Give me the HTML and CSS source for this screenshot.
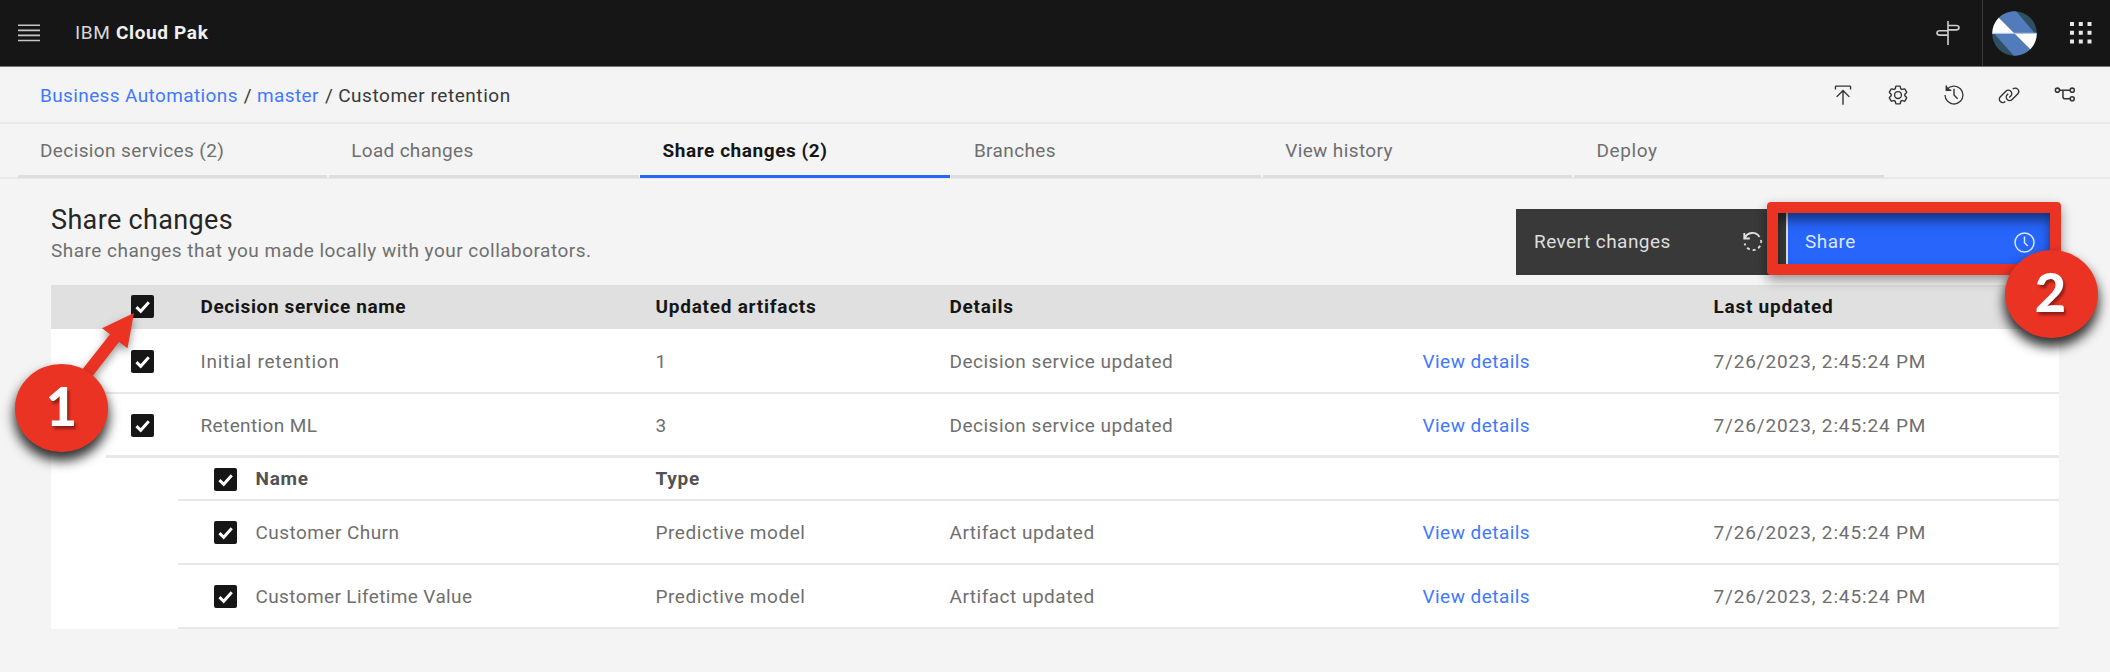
FILE: index.html
```
<!DOCTYPE html>
<html lang="en">
<head>
<meta charset="utf-8">
<title>IBM Cloud Pak</title>
<link rel="stylesheet" href="styles.css">
</head>
<body>
<svg class="defs" width="0" height="0">
  <symbol id="check" viewBox="0 0 22 22"><path d="M5.2 11.6 9.3 15.6 17 7" fill="none" stroke="#fff" stroke-width="2.8"/></symbol>
</svg>
<header class="topbar">
  <svg class="menu-icon" width="22" height="18" viewBox="0 0 22 18" stroke="#c6c6c6" stroke-width="1.6"><path d="M0 1.2h22M0 6.4h22M0 11.4h22M0 16.5h22"/></svg>
  <div class="brand">IBM <b>Cloud Pak</b></div>
  <svg class="sign-icon" width="26" height="26" viewBox="0 0 26 26" fill="none" stroke="#d0d0d0" stroke-width="1.6"><path d="M13 1v24M13 5.500h8q3 0 3 2.200t-3 2.200H13M13 10.700H5q-3 0-3 2.200t3 2.200H13"/></svg>
  <div class="account">
    <svg width="45" height="45" viewBox="0 0 45 45"><clipPath id="disc"><circle cx="22.500" cy="22.500" r="22.300"/></clipPath><g clip-path="url(#disc)"><path fill="#2f4f63" d="M0 0h45v45H0z"/><path fill="#527bbb" d="M0 0h24l19 22.500H22.500zM45 45H22L2 22.500h20.500z"/><path fill="#fff" d="M0 0l22.500 22.500H0zM45 45 22.500 22.500H45z"/><path stroke="#b9cce8" d="M0 22.300h45"/></g></svg>
    <svg class="grid-icon" width="22" height="22" viewBox="0 0 22 22" fill="#e8e8e8"><path d="M0 0h4v4H0zM8.800 0h4v4h-4zM17.500 0h4v4h-4zM0 8.800h4v4H0zM8.800 8.800h4v4h-4zM17.500 8.800h4v4h-4zM0 17.500h4v4H0zM8.800 17.500h4v4h-4zM17.500 17.500h4v4h-4z"/></svg>
  </div>
</header>
<div class="crumbs">
  <nav><a class="c1">Business Automations</a><i>/</i><a class="c2">master</a><i>/</i><span class="c3">Customer retention</span></nav>
  <div class="tools">
    <svg viewBox="0 0 32 32"><path d="M6 18l1.410 1.410L15 11.830V30h2V11.830l7.590 7.580L26 18 16 8z"/><path d="M6 8V4h20v4h2V4a2 2 0 0 0-2-2H6a2 2 0 0 0-2 2v4z"/></svg>
    <svg viewBox="0 0 32 32"><path d="M27 16.760v-1.530l1.920-1.680A2 2 0 0 0 29.300 11l-2.360-4a2 2 0 0 0-1.730-1 2 2 0 0 0-.64.100l-2.430.820a11.350 11.350 0 0 0-1.310-.750l-.51-2.520a2 2 0 0 0-2-1.610h-4.680a2 2 0 0 0-2 1.610l-.51 2.520a11.480 11.480 0 0 0-1.320.750l-2.380-.86A2 2 0 0 0 6.790 6a2 2 0 0 0-1.730 1L2.700 11a2 2 0 0 0 .41 2.510L5 15.240v1.530l-1.890 1.680A2 2 0 0 0 2.700 21l2.360 4a2 2 0 0 0 1.730 1 2 2 0 0 0 .64-.1l2.430-.82a11.350 11.350 0 0 0 1.310.750l.51 2.520a2 2 0 0 0 2 1.610h4.720a2 2 0 0 0 2-1.610l.51-2.520a11.480 11.480 0 0 0 1.320-.75l2.420.82a2 2 0 0 0 .64.100 2 2 0 0 0 1.730-1l2.280-4a2 2 0 0 0-.41-2.510zM25.210 24l-3.430-1.160a8.860 8.860 0 0 1-2.710 1.570L18.360 28h-4.720l-.71-3.550a9.360 9.360 0 0 1-2.700-1.570L6.790 24l-2.360-4 2.720-2.400a8.900 8.900 0 0 1 0-3.130L4.430 12l2.360-4 3.430 1.160a8.860 8.860 0 0 1 2.710-1.570L13.640 4h4.720l.71 3.550a9.360 9.360 0 0 1 2.700 1.570L25.210 8l2.360 4-2.720 2.400a8.900 8.900 0 0 1 0 3.130L27.570 20z"/><path d="M16 22a6 6 0 1 1 6-6 5.940 5.940 0 0 1-6 6zm0-10a3.910 3.910 0 0 0-4 4 3.910 3.910 0 0 0 4 4 3.910 3.910 0 0 0 4-4 3.910 3.910 0 0 0-4-4z"/></svg>
    <svg viewBox="0 0 32 32"><path d="M20.590 22 15 16.410V7h2v8.580l5 5.010z"/><path d="M16 2A13.940 13.940 0 0 0 6 6.230V2H4v8h8V8H7.080A12 12 0 1 1 4 16H2A14 14 0 1 0 16 2z"/><path d="M4 2v8h8z"/></svg>
    <svg viewBox="0 0 32 32"><path d="M29.250 6.760a6 6 0 0 0-8.500 0l1.420 1.420a4 4 0 1 1 5.670 5.670l-8 8a4 4 0 1 1-5.670-5.660l1.410-1.420-1.410-1.420-1.420 1.420a6 6 0 0 0 0 8.500A6 6 0 0 0 17 25a6 6 0 0 0 4.270-1.760l8-8a6 6 0 0 0-.02-8.480z"/><path d="M4.190 24.820a4 4 0 0 1 0-5.670l8-8a4 4 0 0 1 5.670 0A3.940 3.940 0 0 1 19 14a4 4 0 0 1-1.170 2.850L15.710 19l1.420 1.420 2.120-2.120a6 6 0 0 0-8.510-8.510l-8 8a6 6 0 0 0 0 8.510A6 6 0 0 0 7 28a6.070 6.070 0 0 0 4.280-1.760l-1.420-1.420a4 4 0 0 1-5.670 0z"/></svg>
    <svg viewBox="0 0 32 32" class="flow"><g><circle cx="5" cy="9" r="3"/><circle cx="26.500" cy="9" r="3"/><circle cx="26.500" cy="21.500" r="3"/><path d="M8 9h15.500M13 9v9.500q0 3 3 3h7.500"/></g></svg>
  </div>
</div>
<nav class="tabs">
  <a>Decision services (2)</a><a class="load">Load changes</a><a class="on">Share changes (2)</a><a>Branches</a><a>View history</a><a class="deploy">Deploy</a>
</nav>
<main>
  <div class="heading">
    <div>
      <h1>Share changes</h1>
      <p>Share changes that you made locally with your collaborators.</p>
    </div>
    <div class="actions">
      <button class="revert"><span>Revert changes</span>
        <svg width="20" height="20" viewBox="0 0 20 20" fill="none" stroke="#e0e0e0" stroke-width="1.900"><path d="M1.300 1v5.500h5.500M1.700 6A8.300 8.300 0 0 1 16.500 5"/><path d="M18 8a8.300 8.300 0 0 1-16.300 3.500" stroke-dasharray="3 3"/></svg>
      </button>
      <button class="share"><span>Share</span>
        <svg width="21" height="21" viewBox="0 0 21 21" fill="none" stroke="#dbe6ff" stroke-width="1.500"><circle cx="10.500" cy="10.500" r="9.500"/><path d="M10.500 4.500v6.300l3.200 3.200"/></svg>
      </button>
    </div>
  </div>
  <section class="table">
    <div class="row head"><svg class="box"><use href="#check"/></svg><b class="name">Decision service name</b><b>Updated artifacts</b><b>Details</b><span></span><b>Last updated</b></div>
    <div class="row"><svg class="box"><use href="#check"/></svg><span class="wide">Initial retention</span><span>1</span><span class="detail">Decision service updated</span><a>View details</a><span class="date">7/26/2023, 2:45:24 PM</span></div>
    <div class="row last"><svg class="box"><use href="#check"/></svg><span>Retention ML</span><span>3</span><span class="detail">Decision service updated</span><a>View details</a><span class="date">7/26/2023, 2:45:24 PM</span></div>
    <div class="row sub subhead"><svg class="box"><use href="#check"/></svg><b>Name</b><b>Type</b></div>
    <div class="row sub"><svg class="box"><use href="#check"/></svg><span class="churn">Customer Churn</span><span class="type">Predictive model</span><span class="detail">Artifact updated</span><a>View details</a><span class="date">7/26/2023, 2:45:24 PM</span></div>
    <div class="row sub"><svg class="box"><use href="#check"/></svg><span>Customer Lifetime Value</span><span class="type">Predictive model</span><span class="detail">Artifact updated</span><a>View details</a><span class="date">7/26/2023, 2:45:24 PM</span></div>
  </section>
</main>
<div class="frame"></div>
<svg class="arrow" width="80" height="90" viewBox="70 300 80 90"><path fill="#eb3323" d="M134 313 102 328.300 110 334.300 78 375 88 382 119 342 127.500 348.300z"/></svg>
<div class="badge one">1</div>
<div class="badge two">2</div>
</body>
</html>
```
FILE: styles.css
```
* { box-sizing: border-box; }
body { margin: 0; width: 2110px; height: 672px; overflow: hidden; position: relative; background: #f4f4f4; color: #6f6f6f; font: 19px/24px Roboto, "Noto Sans", sans-serif; letter-spacing: .38px; white-space: nowrap; }
.defs { position: absolute; }
a { color: #4178ff; }
.topbar { height: 67px; background: #161616; border-bottom: 1px solid #777; display: flex; align-items: center; padding-left: 18px; }
.brand { margin-left: 35px; color: #d8d8d8; letter-spacing: .65px; }
.brand b { color: #f0f0f0; font-weight: 700; }
.sign-icon { margin-left: auto; margin-right: 21px; }
.account { display: flex; align-items: center; height: 66px; width: 128px; border-left: 1px solid #3b3b3b; padding-left: 9px; }
.grid-icon { margin-left: 33px; }
.crumbs { height: 57px; display: flex; align-items: center; padding: 0 34.500px 0 40px; border-bottom: 2px solid #e8e8e8; }
.crumbs nav { display: flex; padding-top: 2px; }
.crumbs i { font-style: normal; color: #393939; margin: 0 5px 0 6px; }
.c3 { color: #393939; letter-spacing: .55px; }
.tools { margin-left: auto; display: flex; gap: 33.500px; }
.tools svg { width: 22px; height: 22px; fill: #333; }
.tools .flow g { fill: none; stroke: #333; stroke-width: 2.200; }
.tabs { height: 55px; display: flex; gap: 1.500px; padding-left: 17.500px; border-bottom: 2px solid #e9e9e9; }
.tabs a { width: 309.800px; height: 54px; padding: 14.500px 0 0 22.500px; border-bottom: 3px solid #dedede; color: #6f6f6f; }
.tabs .load { letter-spacing: .3px; }
.tabs .deploy { letter-spacing: .6px; }
.tabs .on { border-color: #2765fb; color: #161616; font-weight: 700; letter-spacing: .55px; }
main { padding: 0 51px; }
.heading { height: 106px; display: flex; justify-content: space-between; }
h1 { margin: 25px 0 0; color: #262626; font-size: 27px; line-height: 32px; font-weight: 400; letter-spacing: .35px; }
p { margin: 3px 0 0; letter-spacing: .48px; }
.actions { display: flex; height: 66px; margin-top: 30px; }
button { display: flex; justify-content: space-between; align-items: center; width: 270px; border: 0; padding: 0 23px 0 18px; background: #393939; color: #dedede; font: inherit; letter-spacing: .45px; }
.share { background: #2765fb; border-left: 2px solid #e0e0e0; color: #dbe6ff; width: 273px; padding: 0 24px 0 17px; }
.table { background: #fff; height: 344px; }
.row { height: 65px; display: grid; grid-template-columns: 69.500px 455px 294px 473px 291px 1fr; align-items: center; margin-left: 55px; padding: 2px 0 0 25px; border-bottom: 2px solid #e8e8e8; }
.row > span, .row > a { padding-top: 1px; }
.row b { letter-spacing: .75px; }
.row .name { letter-spacing: .62px; }
.row .wide { letter-spacing: .77px; }
.row .detail { letter-spacing: .5px; }
.row .type { letter-spacing: .55px; }
.row .churn { letter-spacing: .45px; }
.row .date { letter-spacing: .86px; }
.row a { letter-spacing: .45px; }
.head { height: 44px; margin-left: 0; padding: 0 0 1px 80px; background: #e0e0e0; border: 0; color: #161616; }
.row.last { height: 64px; border-bottom-width: 3px; }
.sub { height: 64px; margin-left: 127px; padding: 1px 0 0 36px; grid-template-columns: 41.500px 400px 294px 473px 291px 1fr; }
.subhead { height: 43px; color: #525252; }
.box { width: 23px; height: 23px; background: #161616; border-radius: 2px; }
.frame { position: absolute; left: 1767px; top: 202px; width: 294px; height: 73px; border: 11px solid #eb3323; border-radius: 4px; box-shadow: 0 5px 12px rgba(0,0,0,.4), inset 0 7px 12px rgba(0,0,0,.5); }
.arrow { position: absolute; left: 70px; top: 300px; filter: drop-shadow(0 4px 4px rgba(0,0,0,.4)); }
.badge { position: absolute; width: 93px; height: 88px; border-radius: 50%; background: #eb3323; color: #fff; font: 900 54px/84px Lato, "Open Sans", sans-serif; text-align: center; letter-spacing: 0; text-shadow: 2px 3px 3px rgba(0,0,0,.4); box-shadow: 0 8px 12px 1px rgba(0,0,0,.8); }
.one { left: 15px; top: 364px; }
.two { left: 2005px; top: 250px; padding-right: 2px; }
```
